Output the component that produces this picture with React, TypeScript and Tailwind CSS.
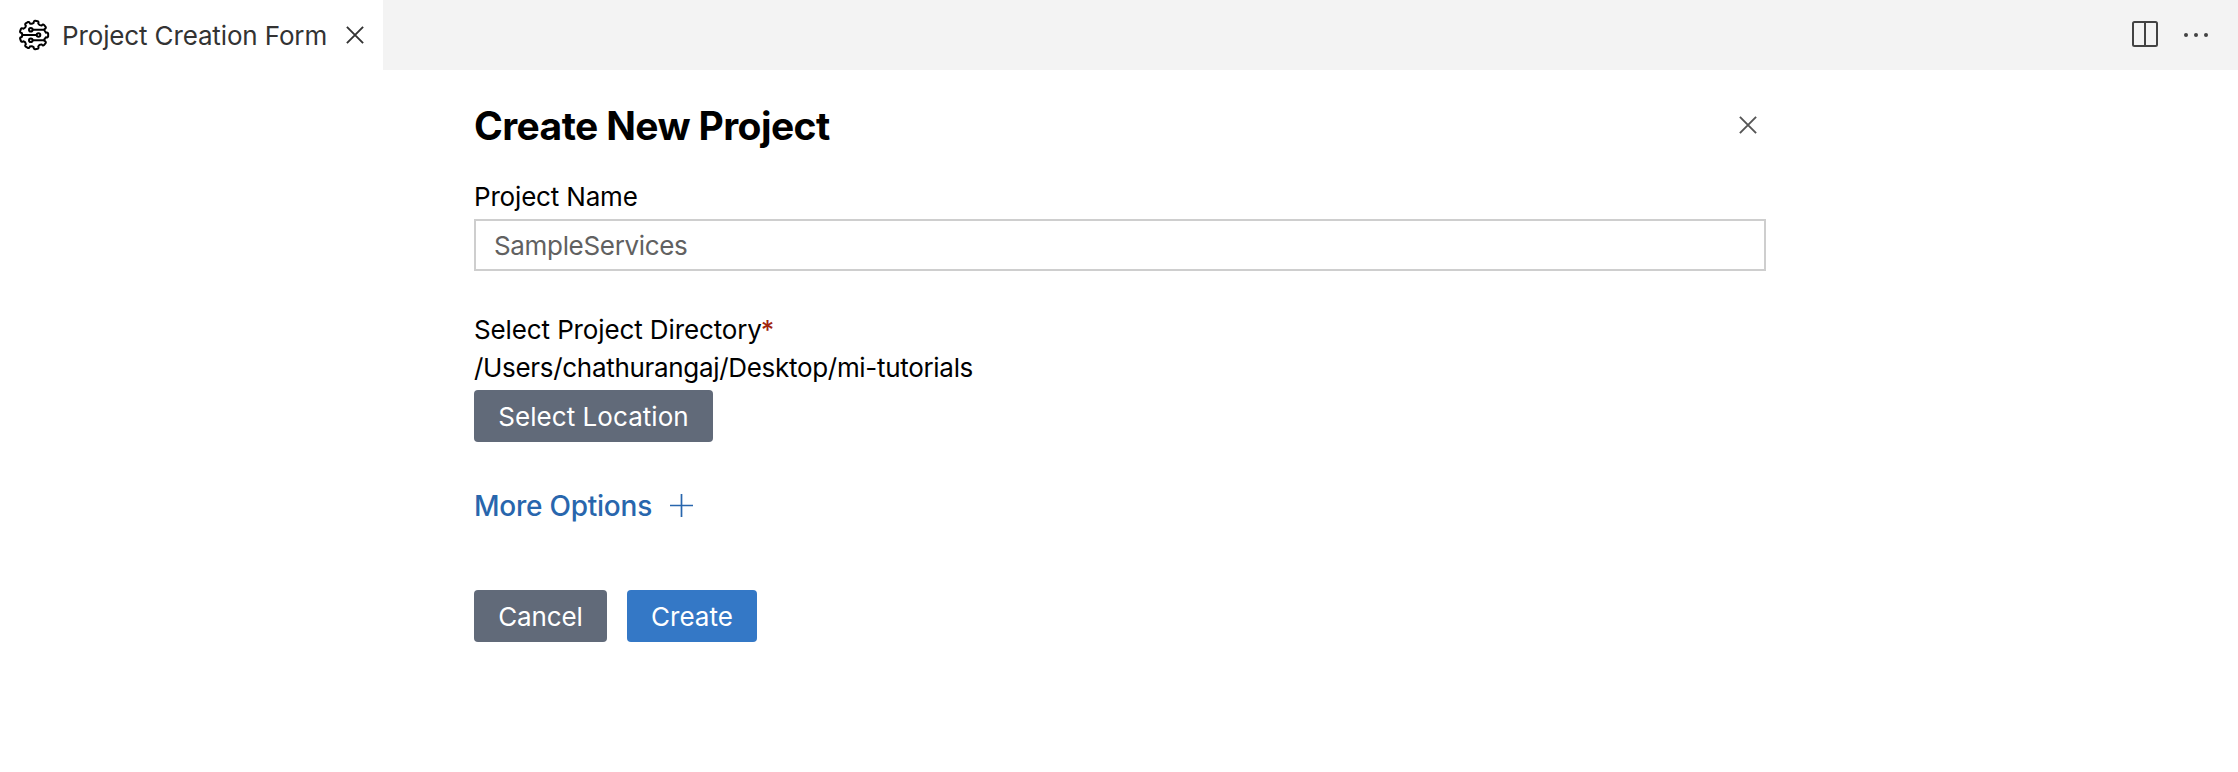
const TEETH = 9;

function gearPath(cx: number, cy: number, outer: number, inner: number) {
  const pt = (r: number, deg: number) => {
    const a = (deg * Math.PI) / 180;
    return `${(cx + r * Math.cos(a)).toFixed(2)} ${(cy + r * Math.sin(a)).toFixed(2)}`;
  };
  let d = "";
  for (let i = 0; i < TEETH; i++) {
    const c = (i * 360) / TEETH;
    d += `${i === 0 ? "M" : "L"}${pt(inner, c - 11)} Q${pt(outer, c - 11)} ${pt(outer, c - 5)} L${pt(outer, c + 5)} Q${pt(outer, c + 11)} ${pt(inner, c + 11)} Q${pt(inner - 1.4, c + 20)} ${pt(inner, c + 29)} `;
  }
  return d + "Z";
}

function GearIcon() {
  return (
    <svg className="size-8 shrink-0" viewBox="0 0 32 32" fill="none" stroke="#000" strokeWidth="2" strokeLinejoin="round">
      <path d={gearPath(15.9, 16, 14.3, 12.2)} />
      <path d="M15 10.8H26.5M18.5 16H3.5M15 21.3H26.5" />
      <circle cx="12.8" cy="10.8" r="1.8" />
      <circle cx="20.5" cy="16" r="1.8" />
      <circle cx="12.8" cy="21.3" r="1.8" />
    </svg>
  );
}

function CloseIcon({ className }: { className: string }) {
  return (
    <svg className={className} viewBox="0 0 18 18" fill="none" stroke="currentColor" strokeWidth="1.9">
      <path d="M.9.9 17.1 17.1M17.1.9.9 17.1" />
    </svg>
  );
}

export default function App() {
  return (
    <div className="h-[772px] w-full bg-white font-['Inter',sans-serif] text-[26px] leading-8 text-black">
      <header className="flex h-[70px] justify-between bg-[#f3f3f3]">
        <div className="flex w-[383px] items-center bg-white pl-[18px] text-[#333]">
          <GearIcon />
          <span className="ml-3 whitespace-nowrap pt-0.5 tracking-[-0.14px]">Project Creation Form</span>
          <CloseIcon className="ml-auto mr-[19px] size-[18px]" />
        </div>
        <div className="flex items-center gap-[26px] pr-[30px] text-[#424242]">
          <svg className="mb-0.5 size-[26px]" viewBox="0 0 26 26" fill="none" stroke="currentColor" strokeWidth="2">
            <rect x="1" y="1" width="24" height="24" rx="1.5" />
            <path d="M13 1v24" />
          </svg>
          <svg className="h-1 w-6" viewBox="0 0 24 4" fill="currentColor">
            <circle cx="2" cy="2" r="2" />
            <circle cx="12" cy="2" r="2" />
            <circle cx="22" cy="2" r="2" />
          </svg>
        </div>
      </header>
      <main className="ml-[474px] flex w-[1292px] flex-col items-start pt-[31px]">
        <div className="flex w-full items-center justify-between pr-[9px]">
          <h1 className="text-[39px] font-bold leading-[50px] tracking-[-0.6px]">Create New Project</h1>
          <CloseIcon className="mb-0.5 size-[18px] text-[#555]" />
        </div>
        <label className="mt-[30px] tracking-[-0.18px]">Project Name</label>
        <div className="mt-[6px] flex h-[52px] w-full items-center border-2 border-[#cecece] pl-[18px] pt-0.5 text-[#616161]">
          <span className="tracking-[-0.33px]">SampleServices</span>
        </div>
        <div className="mt-[43px] flex">
          <span className="tracking-[-0.12px]">Select Project Directory</span>
          <span className="-ml-px font-medium text-[#a1260d]">*</span>
        </div>
        <span className="mt-[6px] tracking-[-0.31px]">/Users/chathurangaj/Desktop/mi-tutorials</span>
        <button className="mt-[6px] h-[52px] w-[239px] rounded-[4px] bg-[#616a79] pt-0.5 tracking-[0.05px] text-white">Select Location</button>
        <button className="mt-[48px] flex items-center text-[28px] font-medium text-[#2866ad]">
          <span className="tracking-[-0.24px]">More Options</span>
          <svg className="mb-px ml-[18px] size-[23px]" viewBox="0 0 23 23" stroke="currentColor" strokeWidth="1.7">
            <path d="M0 11.5h23M11.5 0v23" />
          </svg>
        </button>
        <div className="mt-[68px] flex gap-5 text-white">
          <button className="h-[52px] w-[133px] rounded-[4px] bg-[#616a79] pt-0.5 tracking-[-0.1px]">Cancel</button>
          <button className="h-[52px] w-[130px] rounded-[4px] bg-[#3478c6] pt-0.5">Create</button>
        </div>
      </main>
    </div>
  );
}
